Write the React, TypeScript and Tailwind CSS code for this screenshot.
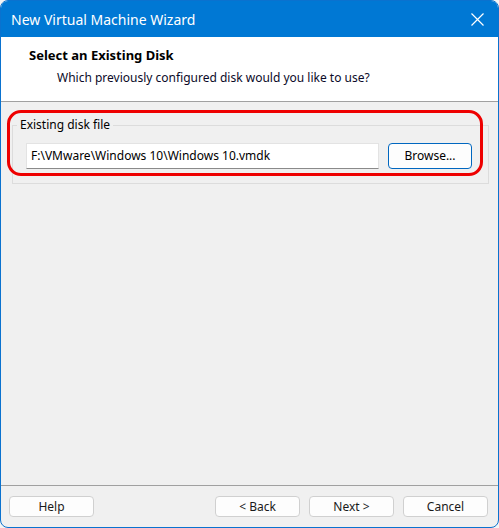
import React from "react";

const font = { fontFamily: '"Segoe UI", "Noto Sans", "Open Sans", sans-serif' };

function WinButton({ label, primary }: { label: string; primary?: boolean }) {
  return (
    <button
      className={
        "h-[21px] w-[85px] rounded-[4px] border bg-[#fdfdfd] text-[12px] text-[#1a1a1a] leading-none " +
        (primary ? "border-[#0067c0]" : "border-[#d0d0d0]")
      }
    >
      {label}
    </button>
  );
}

export default function App() {
  return (
    <div className="w-[499px] h-[528px] bg-[#f4f4f4]" style={font}>
      <div className="flex h-full flex-col overflow-hidden rounded-[8px] border border-[#0a72cf] bg-[#f0f0f0]">
        {/* title bar */}
        <div className="flex h-[36px] shrink-0 items-center justify-between bg-[#0078d4] pl-[10px] pr-[14px]">
          <span className="text-[14px] text-white">New Virtual Machine Wizard</span>
          <svg width="13" height="13" viewBox="0 0 13 13" className="mt-[1px]">
            <path d="M0.5 0.5 L12.5 12.5 M12.5 0.5 L0.5 12.5" stroke="white" strokeWidth="1.2" />
          </svg>
        </div>

        {/* header */}
        <div className="h-[64px] shrink-0 bg-white pl-[28px] pt-[9px]">
          <div className="text-[13px] font-bold text-black">Select an Existing Disk</div>
          <div className="mt-[3px] pl-[28px] text-[12px] text-[#0a0a28]">
            Which previously configured disk would you like to use?
          </div>
        </div>
        <div className="h-px shrink-0 bg-[#a0a0a0]" />

        {/* body */}
        <div className="relative flex-1 pl-[11px] pr-[9px] pt-[14px]">
          <fieldset className="border border-[#dcdcdc] px-[13px] pb-[14px] pt-[9px]">
            <legend className="-ml-[9px] px-[3px] text-[12px] text-black">Existing disk file</legend>
            <div className="flex items-center gap-[9px]">
              <div className="flex h-[26px] w-[353px] items-center border border-[#e3e3e3] border-b-[#8a8a8a] bg-white px-[4px] text-[12px] text-black">
                F:\VMware\Windows 10\Windows 10.vmdk
              </div>
              <button className="h-[26px] w-[84px] rounded-[4px] border border-[#0067c0] bg-[#fdfdfd] text-[12px] text-black">
                Browse...
              </button>
            </div>
          </fieldset>
          {/* annotation */}
          <div className="absolute left-[6px] top-[8px] h-[66px] w-[476px] rounded-[14px] border-[3px] border-[#ee0000]" />
        </div>

        {/* footer */}
        <div className="h-px shrink-0 bg-[#a0a0a0]" />
        <div className="flex h-[41px] shrink-0 items-start pl-[8px] pr-[10px] pt-[10px]">
          <WinButton label="Help" />
          <div className="flex-1" />
          <div className="flex gap-[9px]">
            <WinButton label="< Back" />
            <WinButton label="Next >" />
            <WinButton label="Cancel" />
          </div>
        </div>
      </div>
    </div>
  );
}
